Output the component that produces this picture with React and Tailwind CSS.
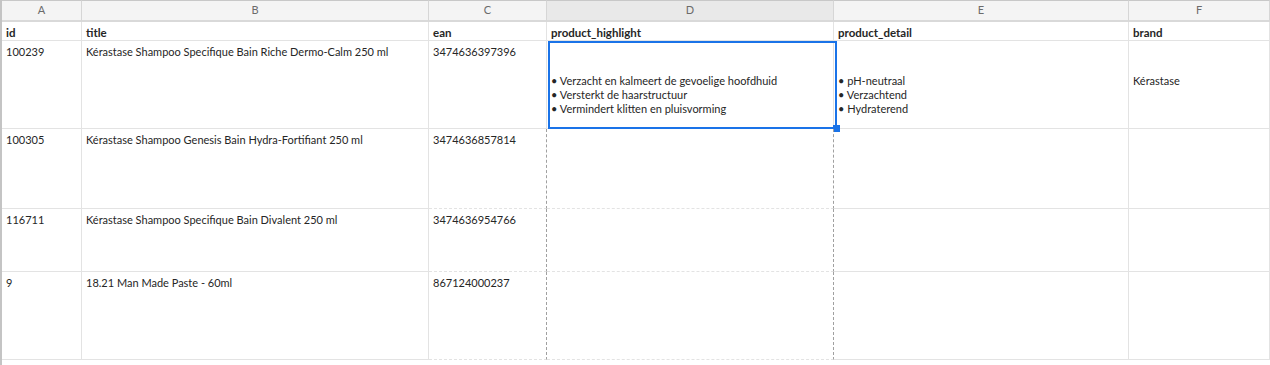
import React from 'react';

const cols = ['A', 'B', 'C', 'D', 'E', 'F'];

const header = ['id', 'title', 'ean', 'product_highlight', 'product_detail', 'brand'];

const rows = [
    {
        h: 'h-[88px]',
        cells: [
            '100239',
            'Kérastase Shampoo Specifique Bain Riche Dermo-Calm 250 ml',
            '3474636397396',
            ['Verzacht en kalmeert de gevoelige hoofdhuid', 'Versterkt de haarstructuur', 'Vermindert klitten en pluisvorming'],
            ['pH-neutraal', 'Verzachtend', 'Hydraterend'],
            'Kérastase',
        ],
    },
    {
        h: 'h-[80px]',
        cells: ['100305', 'Kérastase Shampoo Genesis Bain Hydra-Fortifiant 250 ml', '3474636857814', '', '', ''],
    },
    {
        h: 'h-[63px]',
        cells: ['116711', 'Kérastase Shampoo Specifique Bain Divalent 250 ml', '3474636954766', '', '', ''],
    },
    {
        h: 'h-[88px]',
        cells: ['9', '18.21 Man Made Paste - 60ml', '867124000237', '', '', ''],
    },
];

const Cell = ({ value, dashed, first }) => {
    const border = dashed ? 'border-r border-dashed border-r-[#a0a0a0]' : 'border-r border-r-[#e3e3e3]';
    if (Array.isArray(value)) {
        return (
            <div className={`${border} border-b border-b-[#e3e3e3] pl-[4px] pt-[33px] leading-[14px]`}>
                {value.map((line) => (
                    <div key={line}>• {line}</div>
                ))}
            </div>
        );
    }
    const pad = first && value === 'Kérastase' ? 'pt-[33px]' : 'pt-[4px]';
    return (
        <div className={`${border} border-b border-b-[#e3e3e3] pl-[4px] ${pad} leading-[14px] truncate`}>{value}</div>
    );
};

const App = () => {
    return (
        <div
            className="w-[1270px] h-[365px] bg-white text-[#262626] text-[11px] overflow-hidden border-l-2 border-l-[#c4c4c4]"
            style={{ fontFamily: 'Lato, "Open Sans", sans-serif' }}
        >
            <div className="grid grid-cols-[80px_347px_118px_287px_295px_141px]">
                {cols.map((c) => (
                    <div
                        key={c}
                        className={`h-[22px] flex items-center justify-center text-[#6b6b6b] text-[11px] border-t border-t-[#c8c8c8] border-r border-r-[#d6d6d6] border-b-2 border-b-[#d9d9d9] ${c === 'D' ? 'bg-[#e9e9e9]' : 'bg-[#f4f4f4]'}`}
                    >
                        {c}
                    </div>
                ))}
                {header.map((t) => (
                    <div
                        key={t}
                        className="h-[19px] font-bold text-[11.5px] pl-[4px] pt-[4px] leading-[14px] border-r border-r-[#e3e3e3] border-b border-b-[#e3e3e3]"
                    >
                        {t}
                    </div>
                ))}
            </div>
            {rows.map((row, ri) => (
                <div key={ri} className={`grid grid-cols-[80px_347px_118px_287px_295px_141px] ${row.h} relative`}>
                    {row.cells.map((v, ci) => (
                        <Cell key={ci} value={v} first={ri === 0} dashed={ri > 0 && (ci === 2 || ci === 3)} />
                    ))}
                    {ri === 0 && (
                        <div className="absolute left-[546px] top-0 w-[289px] h-[88px] border-2 border-[#1a73e8] pointer-events-none">
                            <div className="absolute -right-[5px] -bottom-[5px] w-[7px] h-[7px] bg-[#1a73e8]" />
                        </div>
                    )}
                </div>
            ))}
        </div>
    );
};

export default App;
